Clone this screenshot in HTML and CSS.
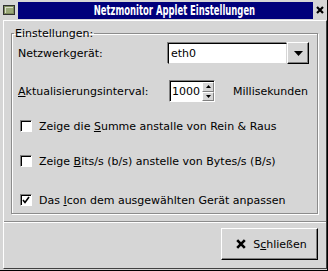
FILE: index.html
```html
<!DOCTYPE html>
<html>
<head>
<meta charset="utf-8">
<link rel="stylesheet" href="styles.css">
</head>
<body>
<div class="window">
  <div class="titlebar">
    <span class="app-icon">
      <svg width="12" height="12" viewBox="0 0 12 12">
        <rect x="0.5" y="1.5" width="11" height="9" fill="#7c8a5c" stroke="#303030"/>
        <rect x="2" y="3" width="8" height="6" fill="#9aa878"/>
        <rect x="2" y="3" width="8" height="1" fill="#d8dcc8"/>
        <rect x="2" y="3" width="1" height="6" fill="#d8dcc8"/>
      </svg>
    </span>
    <div class="title"><span class="title-text">Netzmonitor Applet Einstellungen</span></div>
    <span class="close">
      <svg width="8" height="8" viewBox="0 0 8 8">
        <path d="M1 1 L7 7 M7 1 L1 7" stroke="#000" stroke-width="2.2"/>
      </svg>
    </span>
  </div>
  <div class="client">
    <div class="content">
      <fieldset class="group">
        <legend>Einstellungen:</legend>
        <div class="row row-device">
          <span class="label label-device">Netzwerk<u>g</u>erät:</span>
          <div class="combo">
            <div class="combo-field">eth0</div>
            <div class="combo-btn">
              <svg width="9" height="5" viewBox="0 0 9 5"><path d="M0 0 H9 L4.5 5 Z" fill="#000"/></svg>
            </div>
          </div>
        </div>
        <div class="row row-interval">
          <span class="label label-interval"><u>A</u>ktualisierungsinterval:</span>
          <div class="spin">
            <div class="spin-field">1000</div>
            <div class="spin-btns">
              <div class="spin-up"><svg width="5" height="3" viewBox="0 0 5 3"><path d="M0 3 H5 L2.5 0 Z" fill="#000"/></svg></div>
              <div class="spin-down"><svg width="5" height="3" viewBox="0 0 5 3"><path d="M0 0 H5 L2.5 3 Z" fill="#000"/></svg></div>
            </div>
          </div>
          <span class="unit">Millisekunden</span>
        </div>
        <div class="check-row check-1">
          <span class="checkbox"></span>
          <span class="check-label">Zeige die <u>S</u>umme anstalle von Rein &amp; Raus</span>
        </div>
        <div class="check-row check-2">
          <span class="checkbox"></span>
          <span class="check-label">Zeige <u>B</u>its/s (b/s) anstelle von Bytes/s (B/s)</span>
        </div>
        <div class="check-row check-3">
          <span class="checkbox checked">
            <svg width="8" height="8" viewBox="0 0 8 8"><path d="M1 4 L3 6.5 L7 1" fill="none" stroke="#000" stroke-width="1.6"/></svg>
          </span>
          <span class="check-label">Das <u>I</u>con dem ausgewählten Gerät anpassen</span>
        </div>
      </fieldset>
    </div>
    <div class="sep"></div>
    <div class="actions">
      <button class="btn">
        <svg class="btn-icon" width="10" height="10" viewBox="0 0 10 10">
          <path d="M1.2 1.2 L8.8 8.8 M8.8 1.2 L1.2 8.8" stroke="#000" stroke-width="2.6"/>
        </svg>
        <span>S<u>c</u>hließen</span>
      </button>
    </div>
  </div>
</div>
</body>
</html>
```

FILE: styles.css
```css
html, body {
  margin: 0;
  padding: 0;
}

body {
  width: 328px;
  height: 271px;
  overflow: hidden;
  background: #d6d6d6;
  font-family: "DejaVu Sans", sans-serif;
  font-size: 11px;
  color: #000;
}

u {
  text-decoration: underline;
  text-underline-offset: 1px;
}

.window {
  width: 328px;
  height: 271px;
  box-sizing: border-box;
  display: flex;
  flex-direction: column;
  padding: 0 0 1px 3px;
  border-right: 1px solid #000;
  border-bottom: 1px solid #000;
  background: #d6d6d6;
}

.titlebar {
  height: 20px;
  display: flex;
  align-items: center;
  flex: none;
}

.app-icon {
  width: 12px;
  height: 12px;
  display: flex;
  margin-right: 3px;
}

.title {
  flex: 1;
  height: 17px;
  background: #00007b;
  color: #fff;
  display: flex;
  align-items: center;
  justify-content: center;
  padding-left: 18px;
  overflow: hidden;
}

.title-text {
  display: inline-block;
  font-family: "Liberation Sans Narrow", "DejaVu Sans Condensed", sans-serif;
  font-weight: bold;
  font-size: 14px;
  transform: scaleX(0.67);
  white-space: nowrap;
}

.close {
  width: 14px;
  height: 17px;
  display: flex;
  align-items: center;
  justify-content: center;
}

.client {
  flex: 1;
  display: flex;
  flex-direction: column;
  border-style: solid;
  border-width: 1px;
  border-color: #fff #404040 #404040 #fff;
}

.content {
  padding: 6px 8px 0 7px;
}

.group {
  margin: 0;
  padding: 0 0 6px 0;
  border: 1px solid #8c8c8c;
  box-shadow: inset 1px 1px 0 #fff, 1px 1px 0 #fff;
}

.group legend {
  padding: 0 1px;
  margin-left: 2px;
  line-height: 13px;
}

.row {
  display: flex;
  align-items: center;
  padding-left: 6px;
}

.row-device {
  margin-top: 2px;
  height: 22px;
}

.row-interval {
  margin-top: 16px;
  height: 22px;
}

.label-device {
  width: 149px;
}

.label-interval {
  width: 151px;
}

.combo {
  width: 142px;
  height: 22px;
  display: flex;
}

.combo-field {
  flex: 1;
  background: #fff;
  border-style: solid;
  border-width: 1px;
  border-color: #000 #d6d6d6 #d6d6d6 #000;
  box-shadow: -1px -1px 0 #808080;
  margin: 1px 0 0 1px;
  padding-left: 2px;
  display: flex;
  align-items: center;
}

.combo-btn {
  width: 20px;
  border-style: solid;
  border-width: 1px;
  border-color: #fff #000 #000 #fff;
  box-shadow: inset -1px -1px 0 #808080;
  display: flex;
  align-items: center;
  justify-content: center;
}

.spin {
  width: 46px;
  height: 22px;
  box-sizing: border-box;
  display: flex;
  border-style: solid;
  border-width: 1px;
  border-color: #808080 #fff #fff #808080;
}

.spin-field {
  flex: 1;
  background: #fff;
  border-top: 1px solid #000;
  border-left: 1px solid #000;
  padding-left: 1px;
  display: flex;
  align-items: center;
}

.spin-btns {
  width: 12px;
  display: flex;
  flex-direction: column;
  border-top: 1px solid #000;
}

.spin-up, .spin-down {
  flex: 1;
  display: flex;
  align-items: center;
  justify-content: center;
  border-style: solid;
  border-width: 1px;
  border-color: #fff #808080 #808080 #fff;
}

.unit {
  margin-left: 18px;
}

.check-row {
  display: flex;
  align-items: center;
  height: 14px;
  padding-left: 8px;
}

.check-1 { margin-top: 17px; }
.check-2 { margin-top: 21px; }
.check-3 { margin-top: 25px; }

.checkbox {
  width: 12px;
  height: 12px;
  box-sizing: border-box;
  background: #fff;
  border-style: solid;
  border-width: 1px;
  border-color: #808080 #fff #fff #808080;
  box-shadow: inset 1px 1px 0 #000;
  display: flex;
  align-items: center;
  justify-content: center;
  margin-right: 7px;
}

.sep {
  margin-top: 7px;
  height: 0;
  border-top: 1px solid #8c8c8c;
  border-bottom: 1px solid #fff;
}

.actions {
  display: flex;
  justify-content: flex-end;
  padding: 5px 8px 0 0;
}

.btn {
  width: 97px;
  height: 32px;
  box-sizing: border-box;
  background: #d6d6d6;
  font-family: "DejaVu Sans", sans-serif;
  font-size: 11px;
  color: #000;
  border-style: solid;
  border-width: 1px;
  border-color: #fff #000 #000 #fff;
  box-shadow: inset -1px -1px 0 #808080;
  display: flex;
  align-items: center;
  justify-content: center;
  padding: 0 0 0 4px;
  gap: 7px;
}
```
